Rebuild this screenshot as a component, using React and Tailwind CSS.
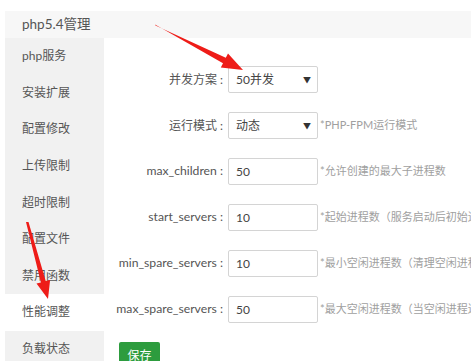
import React from "react";

const menu = ["php服务", "安装扩展", "配置修改", "上传限制", "超时限制", "配置文件", "禁用函数", "性能调整", "负载状态"];

const rows = [
  { label: "并发方案 :", value: "50并发", select: true, desc: "", cn: true },
  { label: "运行模式 :", value: "动态", select: true, desc: "*PHP-FPM运行模式", cn: true },
  { label: "max_children :", value: "50", desc: "*允许创建的最大子进程数" },
  { label: "start_servers :", value: "10", desc: "*起始进程数（服务启动后初始进程数量）" },
  { label: "min_spare_servers :", value: "10", desc: "*最小空闲进程数（清理空闲进程后的保留数量）" },
  { label: "max_spare_servers :", value: "50", desc: "*最大空闲进程数（当空闲进程达到此值时清理）" },
];

export default function App() {
  return (
    <div
      className="relative w-[471px] h-[361px] overflow-hidden bg-white pt-[11px] pl-[5px]"
      style={{ fontFamily: 'Lato, "Noto Sans CJK SC", sans-serif' }}
    >
      <div className="h-[27px] bg-[#f7f7f7] flex items-center pl-[17px] text-[13.5px] text-[#555]">php5.4管理</div>
      <div className="flex">
        <div className="w-[99px] bg-[#f1f1f1] flex flex-col shrink-0">
          {menu.map((m, i) => (
            <div
              key={m}
              className={`h-[36.6px] flex items-center pl-[17px] text-[12px] text-[#555] ${i === 7 ? "bg-white" : ""}`}
            >
              {m}
            </div>
          ))}
        </div>
        <div className="flex-1 flex flex-col pt-[28px] gap-[19px] text-[12px] text-[#555]">
          {rows.map((r) => (
            <div key={r.label} className="flex items-center h-[27px]">
              <div className={`w-[121px] text-right whitespace-nowrap pr-[2px] ${r.cn ? "text-[12px]" : "text-[12.2px]"}`}>{r.label}</div>
              <div className="ml-[3px] w-[90px] h-[27px] border border-[#d4d4d4] rounded-[2px] bg-white flex items-center justify-between pl-[7px] pr-[6px] text-[#444] shrink-0">
                <span>{r.value}</span>
                {r.select && <span className="text-[8px] text-[#333]">▼</span>}
              </div>
              {r.desc && (
                <div className="ml-[2px] text-[11px] text-[#a0a0a0] whitespace-nowrap">{r.desc}</div>
              )}
            </div>
          ))}
          <div className="pl-[15px]">
            <div className="w-[41px] h-[28px] bg-[#2d9c3e] rounded-[2px] text-white text-[12px] flex items-center justify-center">保存</div>
          </div>
        </div>
      </div>
      <svg className="absolute left-0 top-0 pointer-events-none" width="471" height="361">
        <polygon
          fill="#ee1c18"
          points="155,24.5 155.5,25.5 225.8,57.8 228,53.4 243,70 220.8,67.6 223,63.2"
        />
        <polygon
          fill="#ee1c18"
          points="26,222 28.5,222 45.7,281.1 50.1,280 48,299 36.5,283.6 40.9,282.5"
        />
      </svg>
    </div>
  );
}
